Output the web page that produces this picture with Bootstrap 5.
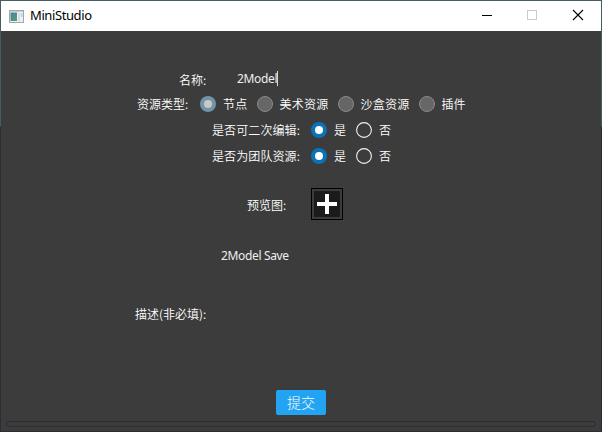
<!DOCTYPE html>
<html lang="zh-CN">
<head>
<meta charset="utf-8">
<title>MiniStudio</title>
<link href="https://cdn.jsdelivr.net/npm/bootstrap@5.3.0/dist/css/bootstrap.min.css" rel="stylesheet">
<style>
html, body { height: 432px; margin: 0; overflow: hidden; }
body { font-family: "Noto Sans", "Noto Sans CJK SC", sans-serif; font-size: 12px; line-height: 16px; color: #fff; background: linear-gradient(#435e66 0, #435e66 126px, #282d38 127px); }
.window-frame { width: 602px; height: 432px; padding: 1px; }
.title-strip { height: 30px; background: #fff; color: #000; padding-left: 8px; }
.title-name { font-size: 13px; margin-left: 6px; letter-spacing: -.4px; line-height: 16px; margin-top: -2px; }
.win-btn { width: 46px; height: 30px; border: 0; background: none; padding: 0; }
.dialog-body { height: 400px; background: #3c3c3c; }
.cjk { font-family: "Noto Sans CJK SC", sans-serif; font-weight: 350; }
.form-line { height: 26px; }
.line-name { padding-left: 178px; margin-top: 35px; height: 25px; }
.line-type { padding-left: 136px; height: 26px; }
.line-flag { padding-left: 211px; }
.line-preview { padding-left: 246px; height: 32px; margin-top: 19px; }
.line-title { padding-left: 220px; height: 20px; margin-top: 26px; }
.line-desc { padding-left: 134px; height: 20px; margin-top: 38px; }
.line-name .caption { width: 58px; padding-top: 2px; }
.line-type .caption { width: 63px; }
.line-flag .caption { width: 99px; letter-spacing: .1px; }
.line-preview .caption { width: 64px; padding-top: 2px; }
.latin { font-family: "Noto Sans", sans-serif; font-weight: 400; font-size: 12px; letter-spacing: -.35px; color: #eee; }
.name-edit { border-right: 1px solid #ddd; line-height: 15px; height: 15px; width: 41px; margin-top: -1px; }
.opt svg { margin-right: 7px; }
.opt-type { margin-right: 9px; letter-spacing: .25px; }
.opt-flag { width: 45px; }
.plus-btn { width: 32px; height: 32px; border: 0; padding: 0; background: none; }
.submit-btn { width: 50px; height: 25px; padding: 0; border: 0; border-radius: 2px; background: #23a4f2; color: #fff; font-size: 14px; line-height: 25px; margin-top: 66px; font-weight: 300; }
.groove { height: 6px; margin: 6px 5px 0; border: 1px solid #2e2e2e; border-radius: 3px; }
</style>
</head>
<body>
<div class="window-frame">
  <header class="title-strip d-flex align-items-center">
    <svg width="15" height="13" viewBox="0 0 15 13">
      <defs><linearGradient id="appfill" x1="0" y1="0" x2="1" y2="1"><stop offset="0" stop-color="#4b7da0"/><stop offset="1" stop-color="#55a078"/></linearGradient></defs>
      <rect x=".5" y=".5" width="14" height="12" fill="#edf1f3" stroke="#9ba9b0"/>
      <path d="M1 1.5h13" stroke="#c5d0d6"/>
      <rect x="1.5" y="2.5" width="6.5" height="8.5" fill="url(#appfill)"/>
      <rect x="9" y="3" width="2" height="8" fill="#d5dde0"/><rect x="12" y="3" width="1.5" height="4" fill="#c3cdd2"/>
    </svg>
    <span class="title-name">MiniStudio</span>
    <div class="d-flex ms-auto">
      <button class="win-btn" aria-label="Minimize"><svg class="d-block" width="46" height="30"><path d="M19 14.5h10" stroke="#000"/></svg></button>
      <button class="win-btn" aria-label="Maximize" disabled><svg class="d-block" width="46" height="30"><rect x="18.5" y="9.5" width="9" height="9" fill="none" stroke="#ccc"/></svg></button>
      <button class="win-btn" aria-label="Close"><svg class="d-block" width="46" height="30"><path d="M18 9l10 10M28 9L18 19" stroke="#000" stroke-width="1.1"/></svg></button>
    </div>
  </header>
  <main class="dialog-body d-flex flex-column cjk">
    <div class="form-line line-name d-flex align-items-center text-nowrap"><span class="caption">名称:</span><span class="latin name-edit">2Model</span></div>
    <div class="form-line line-type d-flex align-items-center text-nowrap">
      <span class="caption">资源类型:</span>
      <span class="opt opt-type d-flex align-items-center"><svg width="16" height="16"><circle cx="8" cy="8" r="8" fill="#7394a8"/><circle cx="8" cy="8" r="4" fill="#c8c8c8"/></svg>节点</span>
      <span class="opt opt-type d-flex align-items-center"><svg width="16" height="16"><circle cx="8" cy="8" r="7.5" fill="#666" stroke="#8a8a8a"/></svg>美术资源</span>
      <span class="opt opt-type d-flex align-items-center"><svg width="16" height="16"><circle cx="8" cy="8" r="7.5" fill="#666" stroke="#8a8a8a"/></svg>沙盒资源</span>
      <span class="opt d-flex align-items-center"><svg width="16" height="16"><circle cx="8" cy="8" r="7.5" fill="#666" stroke="#8a8a8a"/></svg>插件</span>
    </div>
    <div class="form-line line-flag d-flex align-items-center text-nowrap">
      <span class="caption">是否可二次编辑:</span>
      <span class="opt opt-flag d-flex align-items-center"><svg width="16" height="16"><circle cx="8" cy="8" r="8" fill="#0b72b8"/><circle cx="8" cy="8" r="4" fill="#fff"/></svg>是</span>
      <span class="opt opt-flag d-flex align-items-center"><svg width="16" height="16"><circle cx="8" cy="8" r="7.4" fill="none" stroke="#f2f2f2" stroke-width="1.1"/></svg>否</span>
    </div>
    <div class="form-line line-flag d-flex align-items-center text-nowrap">
      <span class="caption">是否为团队资源:</span>
      <span class="opt opt-flag d-flex align-items-center"><svg width="16" height="16"><circle cx="8" cy="8" r="8" fill="#0b72b8"/><circle cx="8" cy="8" r="4" fill="#fff"/></svg>是</span>
      <span class="opt opt-flag d-flex align-items-center"><svg width="16" height="16"><circle cx="8" cy="8" r="7.4" fill="none" stroke="#f2f2f2" stroke-width="1.1"/></svg>否</span>
    </div>
    <div class="line-preview d-flex align-items-center text-nowrap">
      <span class="caption">预览图:</span>
      <button class="plus-btn" aria-label="预览图"><svg class="d-block" width="32" height="32"><rect x=".5" y=".5" width="31" height="31" fill="#3c3c3c" stroke="#000"/><rect x="3" y="3" width="26" height="26" fill="#1b1b1b"/><path d="M6 16h20M16 6v20" stroke="#fff" stroke-width="4"/></svg></button>
    </div>
    <div class="line-title d-flex align-items-center"><span class="latin">2Model Save</span></div>
    <div class="line-desc d-flex align-items-center"><span>描述(非必填):</span></div>
    <button class="submit-btn align-self-center">提交</button>
    <div class="groove"></div>
  </main>
</div>
<script src="https://cdn.jsdelivr.net/npm/bootstrap@5.3.0/dist/js/bootstrap.bundle.min.js"></script>
</body>
</html>
